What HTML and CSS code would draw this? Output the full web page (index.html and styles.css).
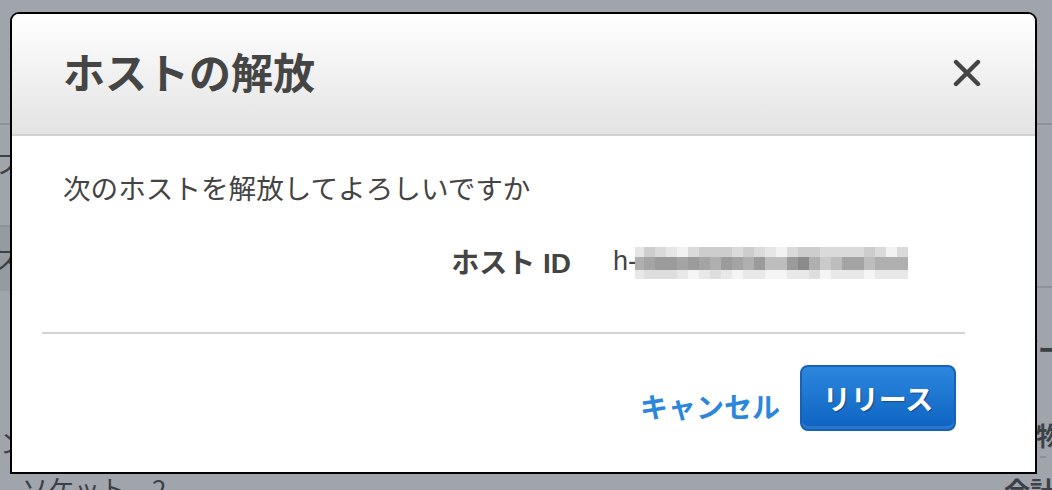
FILE: index.html
```html
<!DOCTYPE html>
<html lang="ja">
<head>
<meta charset="utf-8">
<title>ホストの解放</title>
<link rel="stylesheet" href="styles.css">
</head>
<body>
<div class="page">
  <div class="side side-left">
    <div class="cell cell-top"></div>
    <div class="cell cell-b"><span class="frag">ップ</span></div>
    <div class="cell cell-band"><span class="frag">ス</span></div>
    <div class="cell cell-rest"><span class="frag frag-n">ン</span></div>
  </div>
  <div class="middle"></div>
  <div class="side side-right">
    <div class="cell cell-top"></div>
    <div class="cell cell-rb"></div>
    <div class="cell cell-rest-r">
      <span class="rfrag rfrag-bar">バー</span>
      <span class="rfrag rfrag-mono">荷物</span>
      <span class="rdash"></span>
    </div>
  </div>
  <div class="bottom-row">
    <span class="socket">ソケット　2</span>
    <span class="total">合計</span>
  </div>
</div>

<div class="modal" role="dialog">
  <div class="modal-header">
    <h1 class="modal-title">ホストの解放</h1>
    <button class="close" aria-label="閉じる">
      <svg width="28" height="28" viewBox="0 0 28 28"><path d="M3 3 L25 25 M25 3 L3 25" stroke="#444" stroke-width="4.4" stroke-linecap="round" fill="none"/></svg>
    </button>
  </div>
  <div class="modal-body">
    <p class="question">次のホストを解放してよろしいですか</p>
    <div class="field">
      <div class="label">ホスト ID</div>
      <div class="value"><span class="hid">h-</span><div class="blur">
        <span class="t1"></span><span class="t3"></span><span class="t2"></span><span class="t1"></span><span class="t0"></span><span class="t2"></span><span class="t3"></span><span class="t3"></span><span class="t3"></span><span class="t2"></span><span class="t3"></span><span class="t2"></span><span class="t1"></span><span class="t0"></span><span class="t2"></span><span class="t3"></span><span class="t3"></span><span class="t2"></span><span class="t2"></span><span class="t2"></span><span class="t2"></span><span class="t3"></span><span class="t2"></span><span class="t0"></span><span class="t2"></span>
        <span class="m2"></span><span class="m3"></span><span class="m4"></span><span class="m4"></span><span class="m3"></span><span class="m4"></span><span class="m3"></span><span class="m2"></span><span class="m4"></span><span class="m3"></span><span class="m2"></span><span class="m4"></span><span class="m1"></span><span class="m1"></span><span class="m4"></span><span class="m5"></span><span class="m2"></span><span class="m0"></span><span class="m1"></span><span class="m3"></span><span class="m3"></span><span class="m1"></span><span class="m2"></span><span class="m2"></span><span class="m2"></span>
        <span class="b1"></span><span class="b2"></span><span class="b2"></span><span class="b2"></span><span class="b1"></span><span class="b0"></span><span class="b1"></span><span class="b2"></span><span class="b1"></span><span class="b0"></span><span class="b1"></span><span class="b1"></span><span class="b0"></span><span class="b0"></span><span class="b1"></span><span class="b1"></span><span class="b2"></span><span class="b0"></span><span class="b1"></span><span class="b1"></span><span class="b1"></span><span class="b0"></span><span class="b1"></span><span class="b1"></span><span class="b1"></span>
      </div></div>
    </div>
    <hr class="divider">
    <div class="footer">
      <a class="cancel" href="#">キャンセル</a>
      <button class="release">リリース</button>
    </div>
  </div>
</div>
</body>
</html>
```

FILE: styles.css
```css
html, body {
  margin: 0;
  padding: 0;
}
body {
  width: 1052px;
  height: 490px;
  overflow: hidden;
  position: relative;
  background: #a0a4ab;
  font-family: "Noto Sans CJK JP", "Liberation Sans", sans-serif;
  color: #444;
}

/* background page (dimmed) */
.page {
  width: 1052px;
  height: 490px;
  display: grid;
  grid-template-columns: 12px 1fr 28px;
  grid-template-rows: 477px 13px;
  color: #3c4047;
  overflow: hidden;
}
.side {
  display: flex;
  flex-direction: column;
  overflow: hidden;
}
.cell {
  display: flex;
  align-items: center;
  justify-content: flex-end;
  overflow: hidden;
  white-space: nowrap;
}
.cell-top {
  height: 123px;
  flex: none;
  border-bottom: 2px solid #8e9298;
}
.cell-b {
  flex: none;
  border-bottom: 2px solid #8e9298;
  align-items: flex-start;
  padding-top: 22px;
  box-sizing: border-box;
  height: 102px;
}
.frag {
  font-size: 26px;
  line-height: 30px;
  margin-right: -8px;
}
.cell-band {
  height: 64px;
  flex: none;
  background: #969aa1;
}
.cell-rest {
  flex: 1;
  align-items: flex-start;
  padding-top: 136px;
}
.frag-n {
  margin-right: -14px;
}
.side-right .cell {
  justify-content: flex-start;
}
.cell-rb {
  height: 161px;
  flex: none;
  border-bottom: 2px solid #8e9298;
}
.cell-rest-r {
  flex: 1;
  flex-direction: column;
  align-items: flex-start !important;
  justify-content: flex-start !important;
}
.rfrag {
  font-size: 26px;
  line-height: 30px;
  font-weight: 700;
  display: block;
}
.rfrag-bar {
  margin-top: 46px;
  margin-left: -12px;
}
.rfrag-mono {
  margin-top: 58px;
  margin-left: -14px;
  line-height: 26px;
}
.rdash {
  display: block;
  width: 6px;
  height: 2px;
  background: #8d9197;
  margin-top: 8px;
  margin-left: 16px;
}
.bottom-row {
  grid-column: 1 / -1;
  display: flex;
  justify-content: space-between;
  align-items: flex-start;
  overflow: hidden;
  padding: 0 0 0 22px;
}
.socket {
  font-size: 26px;
  line-height: 30px;
  margin-top: -4px;
  white-space: pre;
}
.total {
  font-size: 26px;
  line-height: 26px;
  font-weight: 700;
  margin-top: 0;
  margin-right: -4px;
}

/* modal */
.modal {
  position: absolute;
  left: 10px;
  top: 12px;
  width: 1027px;
  height: 462px;
  box-sizing: border-box;
  border: 2px solid #000;
  border-radius: 9px 9px 0 0;
  background: #fff;
  overflow: hidden;
}
.modal-header {
  height: 120px;
  border-bottom: 2px solid #d0d0d0;
  background: linear-gradient(#ffffff, #e3e3e3);
  display: flex;
  align-items: center;
  justify-content: space-between;
  padding: 0 54px 0 51px;
}
.modal-title {
  margin: 0;
  font-size: 42px;
  font-weight: 700;
  color: #454545;
  line-height: 50px;
  padding-bottom: 6px;
}
.close {
  border: 0;
  background: none;
  padding: 0;
  width: 28px;
  height: 28px;
  display: block;
  margin-bottom: 2px;
}
.close svg {
  display: block;
}
.modal-body {
  padding: 31px 0 0 0;
}
.question {
  margin: 0 0 0 51px;
  font-size: 27.6px;
  line-height: 40px;
  color: #444;
}
.field {
  display: flex;
  align-items: center;
  margin-top: 34px;
  height: 40px;
}
.label {
  width: 559px;
  text-align: right;
  font-family: "Liberation Sans", "Noto Sans CJK JP", sans-serif;
  font-weight: 700;
  font-size: 28px;
  color: #444;
}
.value {
  margin-left: 42px;
  display: flex;
  align-items: center;
}
.hid {
  font-family: "Liberation Sans", sans-serif;
  font-size: 27px;
  color: #444;
  margin-right: -2px;
}
.blur {
  display: grid;
  grid-template-columns: 9px repeat(24, 11px);
  grid-template-rows: 10px 13px 9px;
  margin-top: 4px;
}
.t0 { background: #f2f2f2; }
.t1 { background: #e6e6e6; }
.t2 { background: #dadada; }
.t3 { background: #cdcdcd; }
.m0 { background: #cacaca; }
.m1 { background: #bdbdbd; }
.m2 { background: #afafaf; }
.m3 { background: #a4a4a4; }
.m4 { background: #9b9b9b; }
.m5 { background: #8a8a8a; }
.b0 { background: #f4f4f4; }
.b1 { background: #e8e8e8; }
.b2 { background: #dedede; }
.divider {
  margin: 51px 70px 0 30px;
  border: 0;
  border-top: 2px solid #d2d2d2;
  height: 0;
}
.footer {
  display: flex;
  justify-content: flex-end;
  align-items: center;
  gap: 20px;
  margin-top: 31px;
  padding-right: 79px;
}
.cancel {
  color: #2b87da;
  text-decoration: none;
  font-size: 28px;
  font-weight: 700;
  line-height: 40px;
  padding-top: 15px;
}
.release {
  height: 66px;
  width: 156px;
  box-sizing: border-box;
  border: 2px solid #1463b9;
  border-radius: 8px;
  background: linear-gradient(#2c87dd, #0e63c2);
  box-shadow: inset 0 -3px 0 rgba(255, 255, 255, 0.12);
  color: #fff;
  font-family: "Noto Sans CJK JP", sans-serif;
  font-size: 28px;
  font-weight: 700;
  text-shadow: 1px 1px 1px rgba(0, 0, 0, 0.35);
  padding: 0;
  line-height: 40px;
}
```
